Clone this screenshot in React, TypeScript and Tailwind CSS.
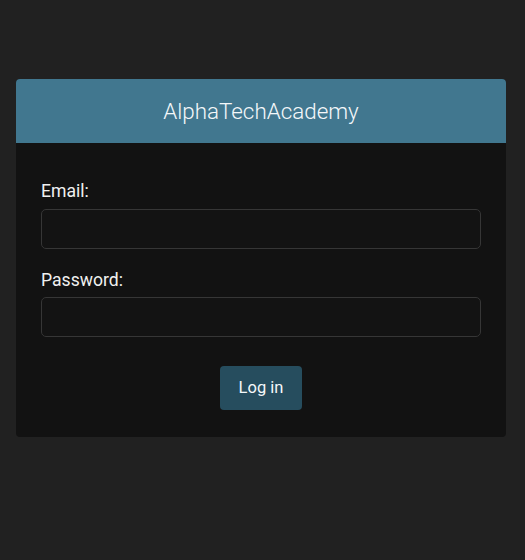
import React from "react";

export default function App() {
  return (
    <div className="min-h-[560px] w-full bg-[#212121] pt-[79px] px-4" style={{ fontFamily: "Roboto, 'Liberation Sans', sans-serif" }}>
      <div className="w-[490px] rounded-[4px] overflow-hidden bg-[#121212]">
        <div className="h-[64px] bg-[#41778f] flex items-center justify-center">
          <h1 className="text-[22.4px] font-light text-[#f4f8fa] leading-none">AlphaTechAcademy</h1>
        </div>
        <form className="px-[25px] pt-[36px] pb-[27px] flex flex-col" onSubmit={(e) => e.preventDefault()}>
          <label className="text-[17.6px] leading-6 text-[#f0f0f0] mb-[6px]">Email:</label>
          <input type="email" className="h-[40px] w-full rounded-[5px] border border-[#363636] bg-[#131313] text-white px-3 outline-none" />
          <label className="text-[17.6px] leading-6 text-[#f0f0f0] mt-[19px] mb-[5px]">Password:</label>
          <input type="password" className="h-[40px] w-full rounded-[5px] border border-[#363636] bg-[#131313] text-white px-3 outline-none" />
          <div className="flex justify-center mt-[29px]">
            <button type="submit" className="h-[44px] w-[82px] rounded-[4px] bg-[#264d5e] text-[16.5px] text-[#f4f8fa]">Log in</button>
          </div>
        </form>
      </div>
    </div>
  );
}
